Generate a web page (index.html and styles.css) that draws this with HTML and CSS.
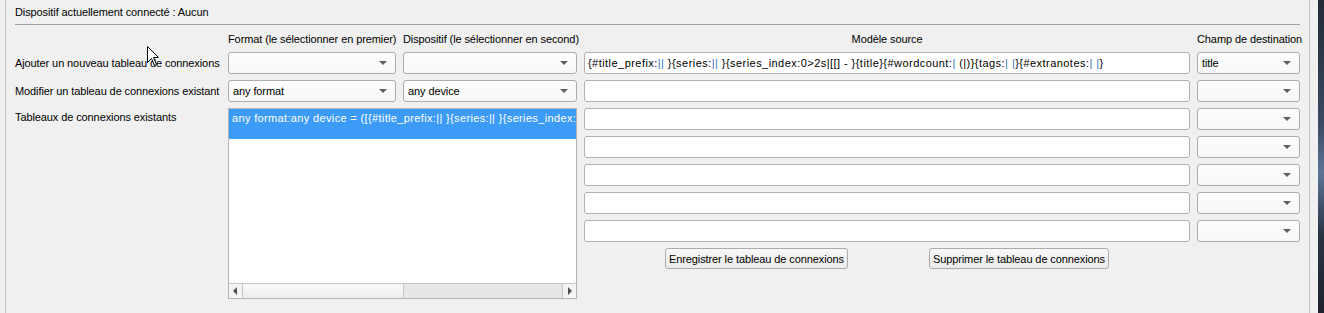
FILE: index.html
```html
<!DOCTYPE html>
<html lang="fr">
<head>
    <meta charset="UTF-8">
    <title>Tableaux de connexions</title>
    <link rel="stylesheet" href="styles.css">
</head>
<body>
<div id="screen">
    <div id="window">
        <div class="status">Dispositif actuellement connecté : Aucun</div>
        <div class="board">
            <div></div>
            <div class="head">Format (le sélectionner en premier)</div>
            <div class="head">Dispositif (le sélectionner en second)</div>
            <div class="head center">Modèle source</div>
            <div class="head">Champ de destination</div>

            <div class="label">Ajouter un nouveau tableau de connexions</div>
            <div class="combo"><span></span><i class="arrow"></i></div>
            <div class="combo"><span></span><i class="arrow"></i></div>
            <div class="field src template">{#title_prefix:<b class="bar">||</b> }{series:<b class="bar">||</b> }{series_index:0&gt;2s|[[] - }{title}{#wordcount:<b class="bar">|</b> (|)}{tags:<b class="bar">|</b> <b class="bar">|</b>}{#extranotes:<b class="bar">|</b> <b class="bar">|</b>}</div>
            <div class="combo dest"><span>title</span><i class="arrow"></i></div>

            <div class="label">Modifier un tableau de connexions existant</div>
            <div class="combo"><span>any format</span><i class="arrow"></i></div>
            <div class="combo"><span>any device</span><i class="arrow"></i></div>
            <div class="field src"></div>
            <div class="combo dest"><span></span><i class="arrow"></i></div>

            <div class="label top">Tableaux de connexions existants</div>
            <div class="list">
                <div class="items">
                    <div class="item selected">any format:any device = ([{#title_prefix:|| }{series:|| }{series_index:0&gt;2s|[[] - }{title}{#wordcount:| (|)}{tags:| |}{#extranotes:| |}', 'title')]</div>
                </div>
                <div class="hbar">
                    <span class="step left"></span>
                    <span class="thumb"></span>
                    <span class="track"></span>
                    <span class="step right"></span>
                </div>
            </div>
            <div class="field src"></div>
            <div class="combo dest"><span></span><i class="arrow"></i></div>
            <div class="field src"></div>
            <div class="combo dest"><span></span><i class="arrow"></i></div>
            <div class="field src"></div>
            <div class="combo dest"><span></span><i class="arrow"></i></div>
            <div class="field src"></div>
            <div class="combo dest"><span></span><i class="arrow"></i></div>
            <div class="field src"></div>
            <div class="combo dest"><span></span><i class="arrow"></i></div>

            <div class="actions">
                <button>Enregistrer le tableau de connexions</button>
                <button>Supprimer le tableau de connexions</button>
            </div>
        </div>
    </div>
    <div id="desk"></div>
</div>
<svg class="pointer" width="13" height="21" viewBox="0 0 13 21">
    <path d="M0.5 0.5 L0.5 16.5 L4.5 12.5 L7.5 19.5 L9.5 18.5 L6.5 11.5 L11.5 11.5 Z" fill="#fff" stroke="#000" stroke-width="1"/>
</svg>
</body>
</html>
```

FILE: styles.css
```css
*{
    margin: 0;
    padding: 0;
    box-sizing: border-box;
}
body{
    background: #f0f0f0;
    font-family: "Liberation Sans", Arial, sans-serif;
    font-size: 11px;
    letter-spacing: -0.1px;
    color: #000;
}
#screen{
    display: flex;
    height: 313px;
    overflow: hidden;
}
#window{
    margin-left: 5px;
    width: 1305px;
    height: 313px;
    border-left: 1px solid #c4c4c4;
    border-right: 1px solid #c4c4c4;
    padding: 0 9px;
}
#desk{
    margin-left: auto;
    width: 6px;
    background: linear-gradient(to bottom, #232a36, #3b4a63 40%, #5d7598 55%, #2a3344 75%, #1d222c);
}
.status{
    padding: 5px 0 5px 0;
    line-height: 14px;
    border-bottom: 1px solid #a0a0a0;
}
.board{
    display: grid;
    grid-template-columns: 206px 168px 174px 606px 103px;
    grid-template-rows: 14px repeat(7, 22px) 21px 24px;
    column-gap: 7px;
    row-gap: 6px;
    padding-top: 7px;
}
.head{
    line-height: 14px;
    white-space: nowrap;
}
.head.center{
    text-align: center;
}
.label{
    line-height: 22px;
    white-space: nowrap;
}
.label.top{
    line-height: 14px;
    padding-top: 2px;
}
.combo{
    display: flex;
    align-items: center;
    justify-content: space-between;
    height: 22px;
    padding: 0 8px 0 4px;
    border: 1px solid #acacac;
    border-radius: 3px;
    background: linear-gradient(#fdfdfd, #f7f7f7);
}
.arrow{
    width: 0;
    height: 0;
    border-left: 4px solid transparent;
    border-right: 4px solid transparent;
    border-top: 4px solid #606060;
}
.src{
    grid-column: 4;
}
.dest{
    grid-column: 5;
}
.field{
    height: 22px;
    line-height: 20px;
    padding: 0 3px;
    border: 1px solid #b0b0b0;
    border-radius: 3px;
    background: #fff;
    white-space: nowrap;
    overflow: hidden;
}
.template{
    letter-spacing: 0.45px;
}
.bar{
    font-weight: normal;
    color: #3a74c2;
}
.list{
    grid-column: 2 / 4;
    grid-row: 4 / 11;
    display: flex;
    flex-direction: column;
    border: 1px solid #b4b4b4;
    background: #fff;
}
.items{
    flex: 1;
    overflow: hidden;
}
.item{
    height: 30px;
    padding: 2px 3px;
    line-height: 14px;
    letter-spacing: 0.35px;
    white-space: nowrap;
    overflow: hidden;
}
.item.selected{
    background: #3c9bf6;
    color: #fff;
}
.hbar{
    display: flex;
    height: 15px;
    border-top: 1px solid #c8c8c8;
    background: #e7e7e7;
}
.step{
    position: relative;
    width: 14px;
    background: #f4f4f4;
}
.step.left{
    border-right: 1px solid #c8c8c8;
}
.step.right{
    border-left: 1px solid #c8c8c8;
}
.step.left::after, .step.right::after{
    content: "";
    position: absolute;
    top: 3px;
    border-top: 4px solid transparent;
    border-bottom: 4px solid transparent;
}
.step.left::after{
    left: 4px;
    border-right: 4px solid #505050;
}
.step.right::after{
    left: 5px;
    border-left: 4px solid #505050;
}
.thumb{
    width: 161px;
    background: linear-gradient(#f9f9f9, #ededed);
    border-right: 1px solid #c8c8c8;
}
.track{
    flex: 1;
}
.actions{
    grid-column: 4;
    grid-row: 9;
    display: flex;
    justify-content: space-evenly;
}
.actions button{
    height: 21px;
    padding: 0 3px;
    font-family: "Liberation Sans", Arial, sans-serif;
    font-size: 11px;
    letter-spacing: -0.1px;
    color: #000;
    border: 1px solid #acacac;
    border-radius: 3px;
    background: linear-gradient(#f8f8f8, #ececec);
}
.pointer{
    position: absolute;
    left: 147px;
    top: 46px;
}
```
